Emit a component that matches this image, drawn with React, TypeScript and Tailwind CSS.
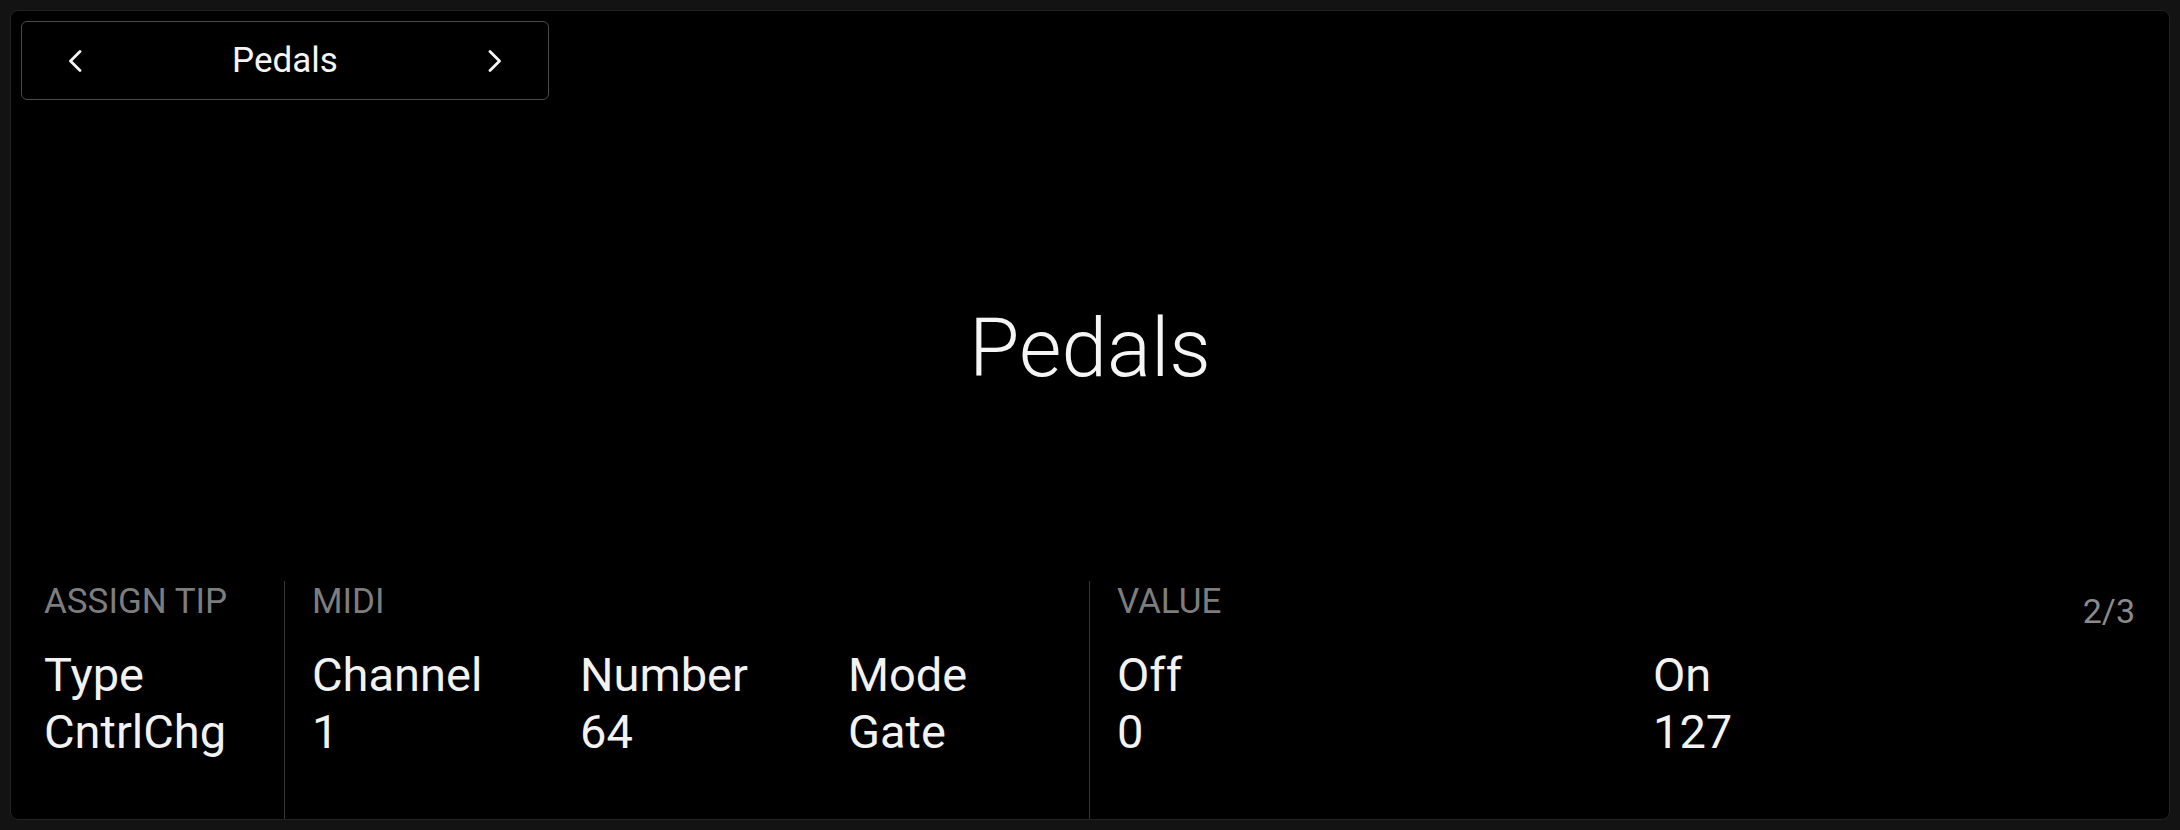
import React from "react";

const Chevron = ({ dir }: { dir: "left" | "right" }) => (
  <svg width="14" height="22" viewBox="0 0 14 22" fill="none">
    <polyline
      points={dir === "left" ? "12,1.5 2.5,11 12,20.5" : "2,1.5 11.5,11 2,20.5"}
      stroke="#f5f5f5"
      strokeWidth="2.8"
      strokeLinecap="round"
      strokeLinejoin="round"
    />
  </svg>
);

const Field = ({ label, value }: { label: string; value: string }) => (
  <div className="flex flex-col text-[47px] leading-[57px] text-[#f2f2f2]">
    <span>{label}</span>
    <span>{value}</span>
  </div>
);

export default function App() {
  return (
    <div
      className="w-[2180px] h-[830px] bg-[#131313] p-[10px]"
      style={{ fontFamily: "Roboto, 'Noto Sans', sans-serif" }}
    >
      <div className="h-full flex flex-col rounded-[8px] border border-[#232323] bg-black overflow-hidden">
        {/* Top selector */}
        <div className="pt-[10px] px-[10px]">
          <div className="w-[528px] h-[79px] rounded-[6px] border-[1.5px] border-[#4a4a4a] flex items-center justify-between px-[46px]">
            <Chevron dir="left" />
            <span className="text-[35px] text-[#f5f5f5] leading-none">Pedals</span>
            <Chevron dir="right" />
          </div>
        </div>

        {/* Title */}
        <div className="flex-1 flex items-center justify-center pt-[14px]">
          <span className="text-[82px] font-light leading-none text-[#f5f5f5]">Pedals</span>
        </div>

        {/* Info row */}
        <div className="h-[238px] flex">
          <div className="w-[274px] pl-[33px] pt-[1px] border-r border-[#363636]">
            <div className="text-[35px] leading-[40px] text-[#7d7d7d]">ASSIGN TIP</div>
            <div className="mt-[24px]">
              <Field label="Type" value="CntrlChg" />
            </div>
          </div>

          <div className="w-[805px] pl-[27px] pt-[1px] border-r border-[#363636]">
            <div className="text-[35px] leading-[40px] text-[#7d7d7d]">MIDI</div>
            <div className="mt-[24px] grid grid-cols-[268px_268px_1fr]">
              <Field label="Channel" value="1" />
              <Field label="Number" value="64" />
              <Field label="Mode" value="Gate" />
            </div>
          </div>

          <div className="flex-1 pl-[27px] pr-[34px] pt-[1px]">
            <div className="flex justify-between">
              <div className="text-[35px] leading-[40px] text-[#7d7d7d]">VALUE</div>
              <div className="text-[34px] leading-[40px] text-[#8a8a8a] mt-[9px]">2/3</div>
            </div>
            <div className="-mt-[9px] pt-[24px] grid grid-cols-[536px_1fr]">
              <Field label="Off" value="0" />
              <Field label="On" value="127" />
            </div>
          </div>
        </div>
      </div>
    </div>
  );
}
